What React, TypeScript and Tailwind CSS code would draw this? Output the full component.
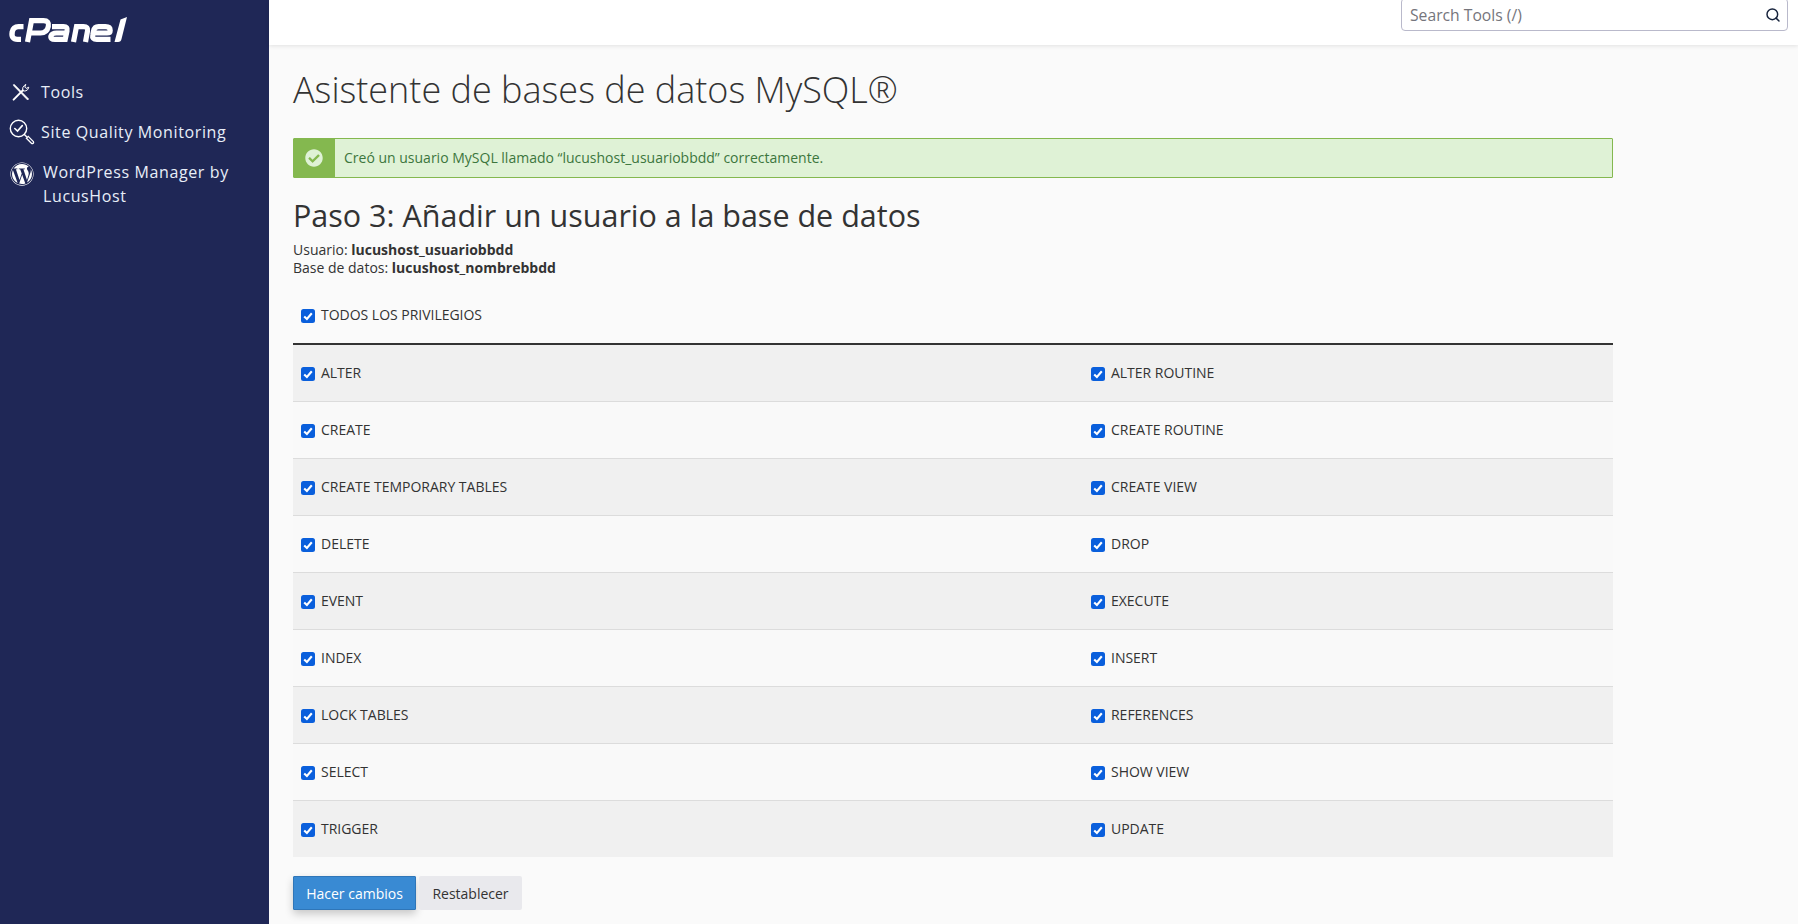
import React from "react";
import { FaWordpress, FaCheckCircle } from "react-icons/fa";
import { Search } from "lucide-react";

const rows: [string, string][] = [
  ["ALTER", "ALTER ROUTINE"],
  ["CREATE", "CREATE ROUTINE"],
  ["CREATE TEMPORARY TABLES", "CREATE VIEW"],
  ["DELETE", "DROP"],
  ["EVENT", "EXECUTE"],
  ["INDEX", "INSERT"],
  ["LOCK TABLES", "REFERENCES"],
  ["SELECT", "SHOW VIEW"],
  ["TRIGGER", "UPDATE"],
];

function Check({ label }: { label: string }) {
  return (
    <label className="flex items-center gap-[6px] text-[14px] leading-[20px] text-[#333]">
      <span className="mt-[1px] flex h-[14px] w-[14px] shrink-0 items-center justify-center rounded-[2.5px] bg-[#0a5fdc]">
        <svg viewBox="0 0 14 14" className="h-[14px] w-[14px]">
          <path d="M3.2 7.4 L5.9 10 L10.8 4.2" fill="none" stroke="#fff" strokeWidth="2.1" />
        </svg>
      </span>
      <span className="tracking-[-0.02px]">{label}</span>
    </label>
  );
}

function Logo() {
  return (
    <svg viewBox="0 0 130 34" className="h-[34px] w-[130px]" fill="none" stroke="#fff" strokeWidth="5.2">
      <g transform="translate(-5 -12)">
        <path d="M23.5 26.6 H18.5 Q13.2 26.6 12.2 32 Q11 39.4 17.5 39.4 H21" strokeWidth="5.4" />
        <path d="M27.5 42 L31.5 20.6 H43.5 Q49.5 20.6 48.3 26.5 Q47 33 40.5 33 H31" />
        <path d="M52 26.6 H63.5 Q68 26.6 67 31 L65.2 39.4 H55 Q50 39.4 51 35.8 Q52 33 56.5 33 H66.5" />
        <path d="M73.5 42 L76.5 26.6 H83.5 Q88.5 26.6 87.5 31 L85.5 42" />
        <path d="M94 33 H107 Q110.2 33 110.2 30.4 Q110.2 26.6 105.5 26.6 H98.5 Q94.5 26.6 93.5 31 L92.8 35 Q91.8 39.4 96.8 39.4 H110.5" />
        <path d="M120.5 19.5 L127 17 L121.5 39 Q121 42 118 42 H114.5 Z" fill="#fff" stroke="none" />
      </g>
    </svg>
  );
}

function ToolsIcon() {
  return (
    <svg viewBox="0 0 20 20" className="h-[20px] w-[20px]" fill="none" stroke="#fff" strokeLinecap="round">
      <path d="M3.2 2.4 L4.6 3.8 L17.6 17 L16.6 18 L3.4 4.6 L2.4 3.2 Z" fill="#fff" strokeWidth="0.7" />
      <path d="M2.6 17.6 L11.8 8.4" strokeWidth="2" />
      <path d="M11.6 8.6 Q11 5.2 13.4 3.4 L14.8 2.4 L13.8 5 L15.2 6.4 L17.8 5.2 Q17.2 8 15 8.8 Q13.2 9.4 11.6 8.6 Z" stroke="#fff" strokeWidth="1" />
    </svg>
  );
}

function QualityIcon() {
  return (
    <svg viewBox="0 0 26 26" className="h-[26px] w-[26px]" fill="none" stroke="#fff" strokeLinecap="round">
      <circle cx="9.5" cy="9.5" r="8.2" strokeWidth="1.4" />
      <path d="M5.8 9.5 L8.5 12 L13.3 6.6" strokeWidth="1.6" />
      <path d="M15.4 15.4 L17.4 17.4" strokeWidth="1.4" />
      <path d="M17.4 19.2 L19.2 17.4 L24.4 22.6 Q25 23.6 24.1 24.4 Q23.2 25 22.4 24.2 Z" strokeWidth="1.3" />
    </svg>
  );
}

export default function App() {
  return (
    <div className="flex h-[924px] w-full overflow-hidden bg-[#fafafa] font-['Open_Sans',sans-serif] text-[#333]">
      <aside className="flex h-full w-[269px] shrink-0 flex-col bg-[#1f2756] text-[#e8eef8]">
        <div className="pl-[5px] pt-[12px]">
          <Logo />
        </div>
        <nav className="mt-[26px] flex flex-col text-[16px] leading-[24px] tracking-[0.62px]">
          <div className="flex h-[40px] items-center gap-[10px] pl-[11px]">
            <ToolsIcon />
            <span>Tools</span>
          </div>
          <div className="flex h-[40px] items-center gap-[6px] pl-[9px]">
            <QualityIcon />
            <span>Site Quality Monitoring</span>
          </div>
          <div className="flex items-start gap-[9px] pl-[10px] pt-[8px]">
            <FaWordpress className="mt-[2px] h-[24px] w-[24px] shrink-0 text-white" />
            <span className="w-[200px]">WordPress Manager by LucusHost</span>
          </div>
        </nav>
      </aside>
      <div className="flex min-w-0 flex-1 flex-col">
        <header className="flex h-[45px] shrink-0 items-start justify-end bg-white pr-[10px] shadow-[0_1px_4px_rgba(0,0,0,0.1)]">
          <div className="-mt-[2px] flex h-[33px] w-[387px] items-center justify-between rounded-[4px] border border-[#b9b9cb] bg-white pl-[8px] pr-[6px] pt-[1px]">
            <span className="mt-[2px] text-[15.7px] text-[#75757c]">Search Tools (/)</span>
            <Search className="h-[16px] w-[16px] text-[#17233c]" strokeWidth={2.2} />
          </div>
        </header>
        <main className="w-[1344px] pl-[24px]">
          <h1 className="mt-[22px] text-[36px] font-light leading-[46px] text-[#333]">Asistente de bases de datos MySQL®</h1>
          <div className="mt-[25px] flex h-[40px] items-stretch rounded-[1px] border border-[#84b84f] bg-[#dff2d6]">
            <div className="flex w-[41px] items-center justify-center bg-[#84b84f] pr-[1px]">
              <FaCheckCircle className="h-[18px] w-[18px] text-[#dff2d6]" />
            </div>
            <p className="flex items-center pb-[2px] pl-[9px] text-[14px] text-[#3c763d]">Creó un usuario MySQL llamado “lucushost_usuariobbdd” correctamente.</p>
          </div>
          <h2 className="mt-[18px] text-[30.5px] font-medium leading-[38px] text-[#333]">Paso 3: Añadir un usuario a la base de datos</h2>
          <div className="mt-[7px] text-[14px] leading-[18px]">
            <div>Usuario: <b className="font-bold">lucushost_usuariobbdd</b></div>
            <div>Base de datos: <b className="font-bold">lucushost_nombrebbdd</b></div>
          </div>
          <div className="mt-[18px] flex h-[40px] items-center pl-[8px]">
            <Check label="TODOS LOS PRIVILEGIOS" />
          </div>
          <div className="mt-[8px] border-t-2 border-[#333]">
            {rows.map(([a, b], i) => (
              <div
                key={a}
                className={`grid h-[57px] grid-cols-[790px_1fr] items-center border-b border-[#dcdcdc] last:h-[56px] last:border-b-0 ${i % 2 === 0 ? "bg-[#f0f0f0]" : "bg-[#f9f9f9]"}`}
              >
                <div className="pl-[8px]"><Check label={a} /></div>
                <div className="pl-[8px]"><Check label={b} /></div>
              </div>
            ))}
          </div>
          <div className="mt-[19px] flex gap-[3px]">
            <button className="h-[34px] w-[123px] rounded-[1px] border border-[#2f76b8] bg-[#398ad3] text-[14px] text-white shadow-[0_4px_8px_rgba(0,0,0,0.2)]">Hacer cambios</button>
            <button className="h-[34px] w-[103px] rounded-[2px] bg-[#e9e9ed] text-[14px] text-[#333]">Restablecer</button>
          </div>
        </main>
      </div>
    </div>
  );
}
